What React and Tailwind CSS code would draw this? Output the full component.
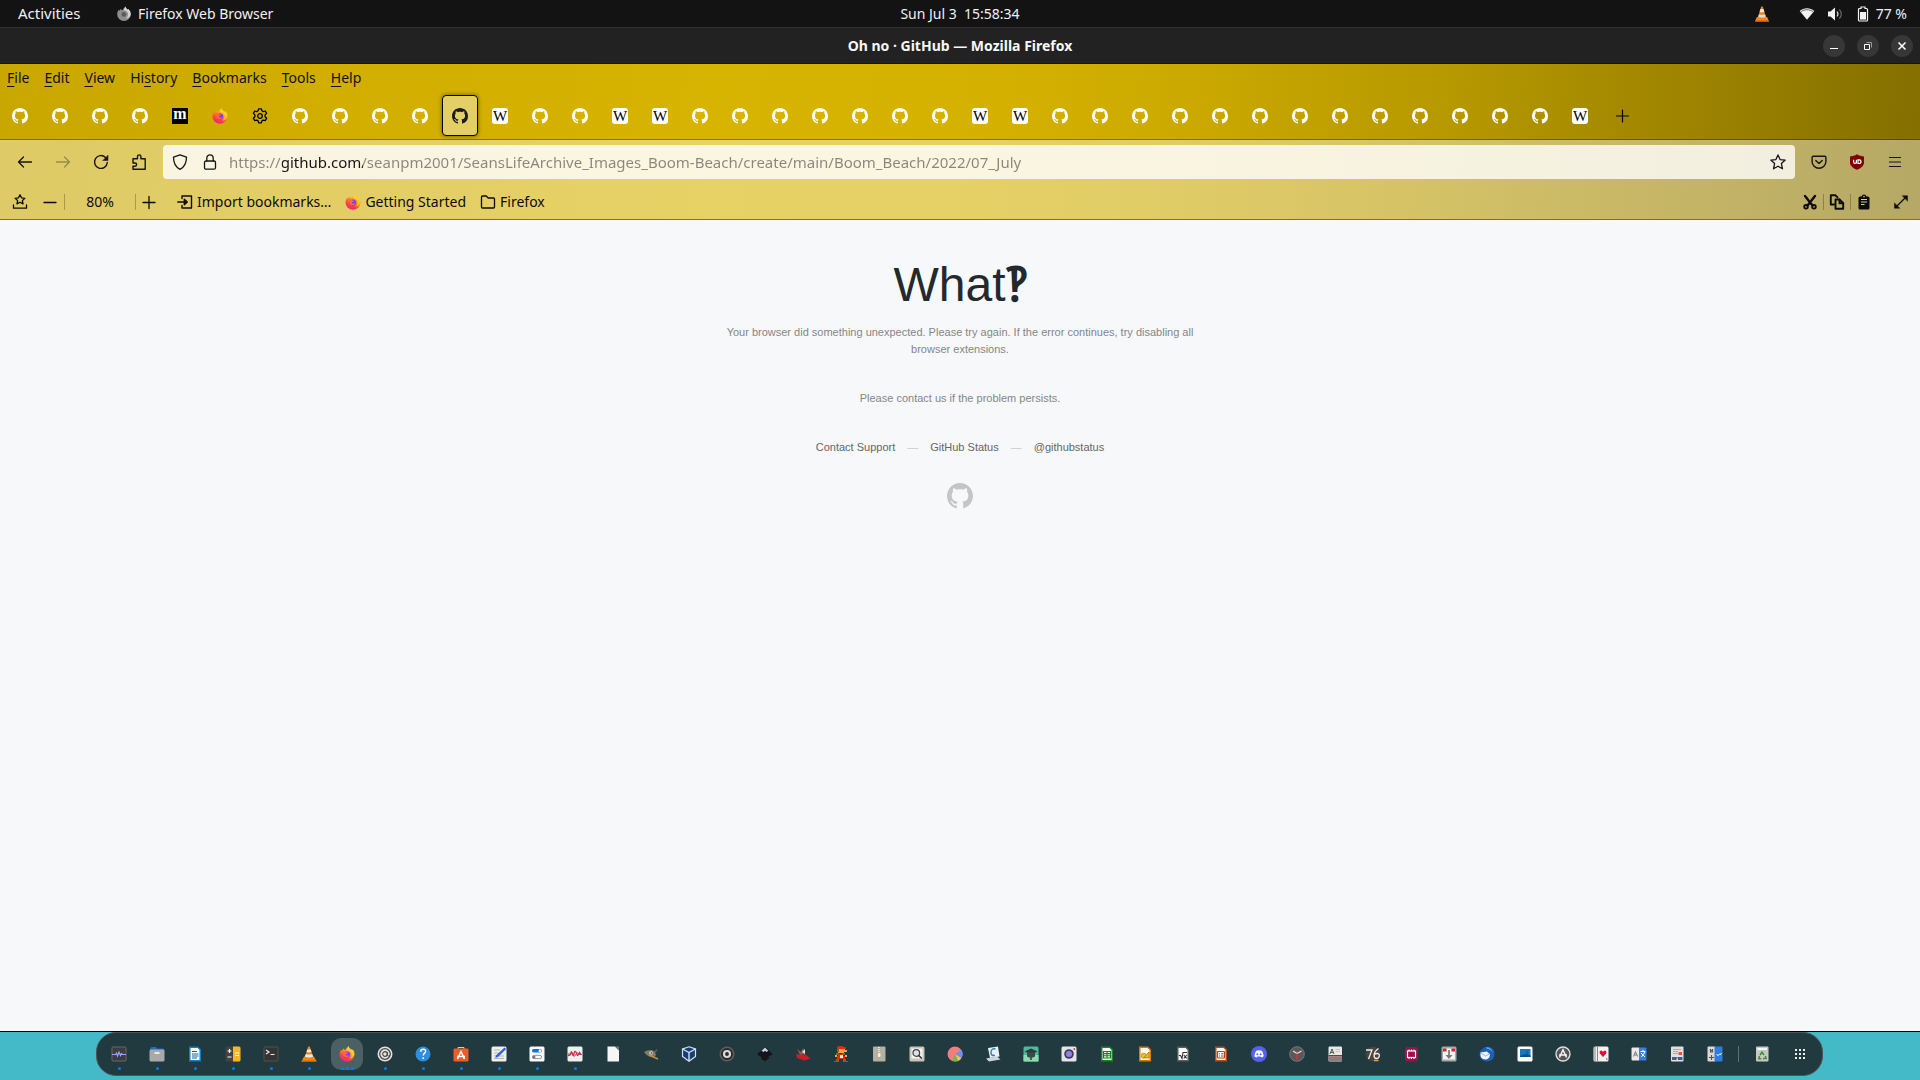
import React from "react";

/* ---------- shared drawings ---------- */

const MARK =
  "M8 0C3.58 0 0 3.58 0 8c0 3.54 2.29 6.53 5.47 7.59.4.07.55-.17.55-.38 0-.19-.01-.82-.01-1.49-2.01.37-2.53-.49-2.69-.94-.09-.23-.48-.94-.82-1.13-.28-.15-.68-.52-.01-.53.63-.01 1.08.58 1.23.82.72 1.21 1.87.87 2.33.66.07-.52.28-.87.51-1.07-1.78-.2-3.64-.89-3.64-3.95 0-.87.31-1.59.82-2.15-.08-.2-.36-1.02.08-2.12 0 0 .67-.21 2.2.82.64-.18 1.32-.27 2-.27.68 0 1.36.09 2 .27 1.53-1.04 2.2-.82 2.2-.82.44 1.1.16 1.92.08 2.12.51.56.82 1.27.82 2.15 0 3.07-1.87 3.75-3.65 3.95.29.25.54.73.54 1.48 0 1.07-.01 1.93-.01 2.2 0 .21.15.46.55.38A8.013 8.013 0 0016 8c0-4.42-3.58-8-8-8z";

function Svg({ children, className = "size-4" }) {
  return (
    <svg viewBox="0 0 16 16" className={"shrink-0 " + className} fill="none" aria-hidden="true">
      {children}
    </svg>
  );
}

function Line({ children, className, width = 1.3 }) {
  return (
    <Svg className={className}>
      <g stroke="currentColor" strokeWidth={width} strokeLinecap="round" strokeLinejoin="round">
        {children}
      </g>
    </Svg>
  );
}

function GitHub({ className }) {
  return (
    <Svg className={className}>
      <path fill="currentColor" d={MARK} />
    </Svg>
  );
}

function Firefox({ className }) {
  return (
    <Svg className={className}>
      <path d="M8 15.8A7.4 7.4 0 0 1 .5 8.4c0-2 .8-3.6 1.9-4.9l.6 1.2c.6-.6 1-1.3 1.1-2.2 1 .4 1.6 1 2 1.8.9-1.6 2-3 3.7-4.1 0 1.8 1.2 2.5 2.4 3.6l.5-.8c1.8 1.5 2.8 3.4 2.8 5.6A7.5 7.5 0 0 1 8 15.8z" fill="url(#ffBody)" />
      <path d="M9.8.2c-1.200 1-1.900 2.300-2 3.700 3.100.1 5 2.300 4.700 5-.2 2.100-1.300 3.300-2.500 4 3-.4 5.300-2.700 5.400-5.600 0-1.500-.6-2.700-1.800-3.800l-.5.8C11.800 3.200 9.800 2 9.800.2z" fill="#ffd52e" opacity=".75" />
      <circle cx="8" cy="8.600" r="3.100" fill="#7a3ff0" />
      <path d="M3.200 5.700c1.600-.7 3.100-.4 4 .6l1.900.4c-.2.9-1.200 1.200-2 1.300-.7.400-.5 1.400.6 1.600 1.200.2 1.800-.5 2.700-.4-.6 1.400-1.700 2.100-3 2-1.900-.1-3.100-1.400-3.100-3z" fill="#ff6a30" />
    </Svg>
  );
}

function GreyFirefox() {
  return (
    <Svg className="size-4">
      <path d="M8 15A6.800 6.800 0 0 1 1.200 8.200c0-1.700.6-3.200 1.600-4.400l.7 1c.5-.5.8-1.100.9-1.800.9.3 1.400.9 1.700 1.500C7 3 8.100 1.700 9.600.5c0 1.600 1.100 2.300 2.100 3.300l.5-.7a6.700 6.700 0 0 1 2.600 5.100A6.800 6.800 0 0 1 8 15z" fill="#8e8e8e" />
      <path d="M9.600.5C8.600 1.500 8 2.700 8 4.200c2.800.3 4.300 2.200 4 4.600-.1 1.700-1 3-2.200 3.700 2.900-.5 4.900-2.300 5-4.800a6 6 0 0 0-2.600-4.600l-.5.7C10.700 2.800 9.600 2.100 9.600.5z" fill="#d4d4d4" />
      <circle cx="7.800" cy="8.400" r="2.300" fill="#5a5a5a" />
    </Svg>
  );
}

function Cone() {
  return (
    <Svg>
      <path d="M2.800 11h10.400l1.800 4.600H1z" fill="#f08a10" />
      <path d="M1.400 14.400h13.200l.4 1.300H1z" fill="#c85f00" />
      <path d="M7.200.5h1.600L12.200 12c-1.800 1.300-6.600 1.300-8.400 0z" fill="#f4810a" />
      <path d="M6.500 3h3l.9 3c-1.200.6-3.600.6-4.800 0z" fill="#e8e8e8" />
      <path d="M5 8.200c1.500.7 4.500.7 6 0l.8 2.600c-1.800 1.200-5.800 1.200-7.600 0z" fill="#dcdcdc" />
    </Svg>
  );
}

function WikiTab() {
  return (
    <span className="flex size-4 items-center justify-center rounded-[3px] bg-white font-['Liberation_Serif',serif] text-[15px] leading-4 text-black">
      W
    </span>
  );
}

function MTab() {
  return (
    <span className="flex size-4 items-center justify-center bg-black font-['Liberation_Serif',serif] text-[16px] leading-[10px] font-bold text-white">
      <span className="pb-1">m</span>
    </span>
  );
}

function Gear() {
  return (
    <Line className="size-4 text-black" width={1.3}>
      <path d="M6.600.8h2.800l.5 2 1.300.8 2-.6 1.400 2.400-1.500 1.500v1.900l1.500 1.500-1.400 2.400-2-.6-1.300.8-.5 2H6.600l-.5-2-1.300-.8-2 .6-1.400-2.400 1.500-1.500V6.900L1.400 5.400 2.800 3l2 .6 1.300-.8z" />
      <circle cx="8" cy="8" r="2.300" />
    </Line>
  );
}

/* ---------- desktop bars ---------- */

function TopBar() {
  return (
    <header className="grid h-7 shrink-0 grid-cols-3 items-center border-b border-[#303030] bg-[#131313] text-[14px] text-[#f0f0f0]">
      <div className="flex items-center pl-[18px]">
        <button className="w-[98px] text-left text-[15px]">Activities</button>
        <button className="flex items-center gap-1.5">
          <GreyFirefox />
          Firefox Web Browser
        </button>
      </div>
      <button className="whitespace-pre">Sun Jul 3  15:58:34</button>
      <div className="flex items-center justify-end pr-[13px]">
        <button aria-label="VLC" className="mr-[29px]"><Cone /></button>
        <button aria-label="System menu" className="flex items-center gap-3">
          <Svg>
            <path d="M.7 5C5 1.300 11 1.300 15.300 5L8 13.800z" fill="#f2f2f2" />
            <path d="M2 5.600c3.700-2.500 8.300-2.500 12 0" stroke="#555" strokeWidth=".9" />
          </Svg>
          <Svg>
            <path d="M1 5.500h2.500L8 1.500v13l-4.500-4H1z" fill="#f2f2f2" />
            <path d="M10 5.500q2 2.500 0 5" stroke="#ddd" strokeWidth="1.200" />
            <path d="M12.300 3.300q4 4.700 0 9.400" stroke="#666" strokeWidth="1.200" />
          </Svg>
          <span className="flex items-center gap-[5px]">
            <Svg>
              <path d="M6 1h4v1.500h1.500q1 0 1 1v10.500q0 1-1 1h-7q-1 0-1-1V3.500q0-1 1-1H6z" stroke="#f2f2f2" strokeWidth="1.200" />
              <path d="M5 6h6v7.600H5z" fill="#f2f2f2" />
            </Svg>
            77 %
          </span>
        </button>
      </div>
    </header>
  );
}

function TitleBar() {
  const btn = "flex size-[22px] items-center justify-center rounded-full bg-[#373737] text-white";
  return (
    <div className="grid h-9 shrink-0 grid-cols-[1fr_auto_1fr] items-center border-b border-[#151515] bg-[#222222]">
      <span />
      <h2 className="text-[14px] font-bold text-[#f7f7f7]">Oh no · GitHub — Mozilla Firefox</h2>
      <div className="flex justify-end gap-3 pr-[7px]">
        <button aria-label="Minimize" className={btn}>
          <Svg><path d="M4 10.500h8" stroke="currentColor" /></Svg>
        </button>
        <button aria-label="Restore" className={btn}>
          <Svg>
            <path d="M4.500 6.500h5v5h-5z" stroke="currentColor" />
            <path d="M6.500 4.500h5v5" stroke="#999" />
          </Svg>
        </button>
        <button aria-label="Close" className={btn}>
          <Svg><path d="M4.500 4.500l7 7m0-7l-7 7" stroke="currentColor" strokeWidth="1.500" /></Svg>
        </button>
      </div>
    </div>
  );
}

/* ---------- browser chrome ---------- */

const MENUS = [
  ["", "F", "ile"],
  ["", "E", "dit"],
  ["", "V", "iew"],
  ["Hi", "s", "tory"],
  ["", "B", "ookmarks"],
  ["", "T", "ools"],
  ["", "H", "elp"],
];

function MenuBar() {
  return (
    <nav className="flex h-7 items-center gap-px pb-0.5 text-[14px] text-[#111]">
      {MENUS.map(([a, u, b]) => (
        <button key={u + b} className="px-[7px]">
          {a}
          <span className="underline underline-offset-3">{u}</span>
          {b}
        </button>
      ))}
    </nav>
  );
}

const TABS = "ggggmfsggggAwggwwgggggggwwgggggggggggggw".split("");

function TabIcon({ kind }) {
  if (kind === "w") return <WikiTab />;
  if (kind === "m") return <MTab />;
  if (kind === "f") return <Firefox />;
  if (kind === "s") return <Gear />;
  return <GitHub className={kind === "A" ? "size-4 text-[#1b1b1b]" : "size-4 text-white"} />;
}

function TabStrip() {
  return (
    <div className="flex h-12 items-center border-b border-black/35">
      {TABS.map((kind, i) => (
        <button
          key={i}
          aria-label={"Tab " + (i + 1)}
          className={
            kind === "A"
              ? "mx-0.5 flex h-[41px] w-9 items-center justify-center rounded-[4px] border border-black bg-white/40 shadow-[0_0_4px_rgba(0,0,0,0.5)]"
              : "flex h-[41px] w-10 items-center justify-center"
          }
        >
          <TabIcon kind={kind} />
        </button>
      ))}
      <button aria-label="New tab" className="flex w-11 justify-center text-black">
        <Line width={1.2}><path d="M8.500 2v12M2.500 8h12" /></Line>
      </button>
    </div>
  );
}

function NavButton({ label, children, faded }) {
  return (
    <button aria-label={label} className={"flex w-[38px] justify-center " + (faded ? "opacity-35" : "")}>
      {children}
    </button>
  );
}

function NavBar() {
  return (
    <div className="flex h-11 items-center gap-[5px] px-1.5 text-[#15141a]">
      <div className="flex">
        <NavButton label="Back"><Line><path d="M6.500 3l-5 5 5 5M1.500 8h13" /></Line></NavButton>
        <NavButton label="Forward" faded><Line><path d="M9.500 3l5 5-5 5M14.500 8h-13" /></Line></NavButton>
        <NavButton label="Reload">
          <Line width={1.400}>
            <path d="M14.300 8.500A6.400 6.400 0 1 1 12.500 3.500" />
            <path d="M15 1.500v5h-5z" fill="currentColor" strokeWidth=".5" />
          </Line>
        </NavButton>
        <NavButton label="Extension">
          <Line width={1.400}>
            <path d="M2 7V4.800h4.500V2.600a1.700 1.700 0 0 1 3.400 0v2.200h4.300v10.400H2v-3h2a1.600 1.600 0 0 0 0-3.200H2z" />
          </Line>
        </NavButton>
      </div>
      <div className="flex h-[34px] flex-1 items-center rounded-[4px] bg-white/80 pr-[9px] pl-[9px]">
        <button aria-label="Tracking protection">
          <Line><path d="M8 .9l6.500 2.300c0 5-1.600 9.600-6.500 12.100C3.100 12.800 1.500 8.200 1.500 3.200z" /></Line>
        </button>
        <button aria-label="Site information" className="ml-3.5">
          <Line>
            <rect x="2.500" y="7" width="11" height="8.200" rx="1.500" />
            <path d="M4.800 7V4a3.200 3.200 0 0 1 6.400 0v3" />
          </Line>
        </button>
        <input
          aria-label="Address"
          className="ml-[11px] h-8 min-w-0 flex-1 bg-[linear-gradient(90deg,#87867f_53px,#15141a_53px,#15141a_134px,#87867f_134px)] bg-clip-text text-[15px] text-transparent outline-none"
          defaultValue="https://github.com/seanpm2001/SeansLifeArchive_Images_Boom-Beach/create/main/Boom_Beach/2022/07_July"
        />
        <button aria-label="Bookmark this page">
          <Line><path d="M8 .9l2.100 4.700 5.100.5-3.800 3.500 1.100 5.200L8 12.200l-4.500 2.600 1.100-5.200L.8 6.100l5.100-.5z" /></Line>
        </button>
      </div>
      <div className="flex">
        <NavButton label="Pocket">
          <Line width={1.400}>
            <path d="M2.300 2.200h11.400q1.200 0 1.200 1.200v4a6.900 6.900 0 0 1-13.800 0v-4q0-1.200 1.200-1.200z" />
            <path d="M4.800 6.400L8 9.500l3.200-3.100" />
          </Line>
        </NavButton>
        <NavButton label="uBlock Origin">
          <Svg>
            <path d="M8 .3c2 1.400 4.500 2 7 2.100v6c0 4-4 5.800-7 7.400-3-1.600-7-3.400-7-7.400v-6C3.500 2.300 6 1.700 8 .3z" fill="#800000" />
            <path d="M4.600 5.800v2.300q0 1.400 1.400 1.400t1.400-1.400V5.800v3.700M9 5.800v3.700h1q2 0 2-1.850t-2-1.850z" stroke="#fff" strokeWidth="1.200" />
          </Svg>
        </NavButton>
        <NavButton label="Menu"><Line width={1.200}><path d="M2.500 3.500h11M2.500 8h11M2.500 12.500h11" /></Line></NavButton>
      </div>
    </div>
  );
}

function Rule() {
  return <span className="h-4 w-px bg-black/25" />;
}

function BookmarksBar() {
  return (
    <div className="flex h-9 items-center border-b border-[#8b7500] text-[14px] text-[#0c0c0d]">
      <button aria-label="Bookmarks menu" className="ml-3">
        <Line>
          <path d="M8 .8l1.500 3 3.300.5-2.400 2.300.6 3.300L8 8.300 5 9.900l.6-3.300-2.400-2.300 3.300-.5z" />
          <path d="M1.500 11v3.200h13V11" />
        </Line>
      </button>
      <button aria-label="Zoom out" className="mr-1.5 ml-3.5">
        <Line><path d="M2 8.500h12" /></Line>
      </button>
      <Rule />
      <button className="w-[70px]">80%</button>
      <Rule />
      <button aria-label="Zoom in" className="ml-[5px]">
        <Line><path d="M2 8.500h12M8 2.500v12" /></Line>
      </button>
      <div className="ml-5 flex gap-3.5">
        <button className="flex items-center gap-1">
          <Line width={1.400}>
            <path d="M5 4.500V2h9.500v12H5v-2.500M.8 8h8" />
            <path d="M7.300 5.300L10.300 8l-3 2.700z" fill="currentColor" />
          </Line>
          Import bookmarks…
        </button>
        <a href="#getting-started" className="flex items-center gap-1"><Firefox />Getting Started</a>
        <button className="flex items-center gap-1">
          <Line><path d="M1.500 3q0-1 1-1h3.700l2 2h5.300q1 0 1 1v8q0 1-1 1h-11q-1 0-1-1z" /></Line>
          Firefox
        </button>
      </div>
      <div className="ml-auto flex items-center pr-[11px]">
        <button aria-label="Cut" className="mr-[5px]">
          <Line width={1.800}>
            <path d="M3 2l7.500 9.500M13 2L5.500 11.500" strokeWidth="2.400" />
            <circle cx="4" cy="12.800" r="1.800" />
            <circle cx="12" cy="12.800" r="1.800" />
          </Line>
        </button>
        <Rule />
        <button aria-label="Copy" className="mx-[5px]">
          <Line width={1.900}>
            <path d="M5 10.500H1.800V1.200h4.500l2.200 2.200" />
            <path d="M6.500 5.500h4l3.700 3.700v5.500H6.500z" />
            <path d="M10.500 5.500v3.700h3.700" />
          </Line>
        </button>
        <Rule />
        <button aria-label="Paste" className="ml-[5px]">
          <Svg>
            <path d="M4 2.500h1.500Q6 .5 8 .5t2.500 2H12q1.500 0 1.500 1.500v10q0 1.500-1.500 1.500H4Q2.500 15.500 2.500 14V4q0-1.500 1.500-1.500z" fill="currentColor" />
            <path d="M5 5.500h6M5 8h6M5 10.500h3.500" stroke="#d8cd93" />
            <circle cx="8" cy="2.600" r=".8" fill="#d8cd93" />
          </Svg>
        </button>
        <button aria-label="Full screen" className="ml-[21px]">
          <Line>
            <path d="M3 13L13 3" />
            <path d="M9.500 1.800h5v5zM1.500 9.200v5h5z" fill="currentColor" strokeWidth=".5" />
          </Line>
        </button>
      </div>
    </div>
  );
}

/* ---------- page ---------- */

function Page() {
  return (
    <main className="flex flex-1 flex-col items-center border-b border-black bg-[#f6f8fa] pt-[41px] font-['Liberation_Sans',Arial,sans-serif] text-[11px] leading-[17px] text-[#868686]">
      <h1 className="text-[48px] leading-[48px] text-[#24292e]">
        What<span className="font-bold">‽</span>
      </h1>
      <p className="mt-[15px] max-w-[480px] text-center">
        Your browser did something unexpected. Please try again. If the error continues, try disabling all browser extensions.
      </p>
      <p className="mt-8">Please contact us if the problem persists.</p>
      <div className="mt-8 flex gap-3 text-[#666]">
        <a href="#support">Contact Support</a>
        <span className="text-[#ccc]">—</span>
        <a href="#status">GitHub Status</a>
        <span className="text-[#ccc]">—</span>
        <a href="#twitter">@githubstatus</a>
      </div>
      <a href="#home" aria-label="GitHub" className="mt-[27px] text-[#c4c5c6]">
        <GitHub className="size-[26px]" />
      </a>
    </main>
  );
}

/* ---------- dock ---------- */

const sheet = (border, extra) => (
  <>
    <path d="M2 .5h9l3 3v12H2z" fill={border} />
    <path d="M3.500 2h7l2 2v10h-9z" fill="#fafafa" />
    {extra}
  </>
);

const tile = (fill, extra) => (
  <>
    <rect x=".5" y=".5" width="15" height="15" rx="1.500" fill={fill} />
    {extra}
  </>
);

const DOCK = [
  ["System Monitor", 1, tile("#3b3d42", <><rect x="1" y="1" width="14" height="14" rx="1" stroke="#666" /><path d="M1 8.500h3.500l1-1.500 1 3L8 6l1.500 3.500 1-2 1 1H15" stroke="#8fa8f5" strokeWidth="1.200" /></>)],
  ["Files", 1, <><path d="M1 3q0-2 2-2h4l1 1.500h6q1.500 0 1.500 2H1z" fill="#1b6fd0" /><rect x=".5" y="3.500" width="15" height="12" rx="1.500" fill="#a9a9a9" /><path d="M5.500 7h5" stroke="#fff" strokeWidth="1.300" /></>],
  ["Writer", 1, sheet("#0b7fc7", <path d="M5 5.500h5M5 8h6.500M5 10h6.500M5 12h5" stroke="#126ba8" strokeWidth="1.200" />)],
  ["Calculator", 1, tile("#45423f", <><path d="M8 .5h6q1.500 0 1.500 1.500v12q0 1.500-1.500 1.500H8z" fill="#f9b526" /><path d="M2.500 5h4M4.500 3v4M2.500 11h4M10 7h4M10 9.500h4" stroke="#fff" strokeWidth="1.200" /></>)],
  ["Terminal", 1, tile("#54514f", <><rect x="1.500" y="1.500" width="13" height="13" fill="#353333" /><path d="M3 4l3 2-3 2M7.500 8.500h4" stroke="#eee" strokeWidth="1.200" /></>)],
  ["VLC", 1, <><path d="M3 10.500h10l2.500 5H.5z" fill="#f48a0c" /><path d="M.5 14.500h15v1.200H.5z" fill="#cf6500" /><path d="M7.200.5h1.600l3.700 11.500c-2 1.300-7 1.300-9 0z" fill="#f4810a" /><path d="M6.300 3.500h3.400l.8 2.500c-1.200.6-3.800.6-5 0zM4.800 8c1.600.8 4.800.8 6.400 0l.9 2.800c-2 1-6.200 1-8.200 0z" fill="#e9e9e9" /></>],
  ["Firefox", 3, null],
  ["Mail address", 1, <><circle cx="8" cy="8" r="7.500" fill="#e4e1de" /><circle cx="8" cy="8" r="5.300" stroke="#4a4a4a" strokeWidth="1.300" /><circle cx="8" cy="8" r="2.300" stroke="#4a4a4a" strokeWidth="1.200" /><path d="M10.400 6v3.500q1.500 1.500 2.600-.5" stroke="#4a4a4a" /></>],
  ["Help", 1, <><circle cx="8" cy="8" r="7.500" fill="#2f8edb" /><path d="M5.700 5.800q0-2.500 2.500-2.500t2.400 2.200c0 1.600-2.400 1.800-2.400 4M8.200 11.200v1.800" stroke="#fff" strokeWidth="1.400" /></>],
  ["Software", 1, <><path d="M5 3V1.500h6V3" stroke="#d9cfc0" /><rect x=".5" y="2.500" width="15" height="13" rx="1.200" fill="#e95d2c" /><path d="M4.500 13L8 5.500l3.500 7.500M4 10.500h8" stroke="#fff" strokeWidth="1.500" /></>],
  ["Text Editor", 1, tile("#f1efe9", <><path d="M3 4h6M3 7h5M3 10h10M3 12.500h10" stroke="#b7b3a8" /><path d="M13.500 1.500l1.700 1.500L7 11l-2.700 1 .9-2.700z" fill="#2e5fe0" /></>)],
  ["Settings", 1, tile("#fafafa", <><rect x="3" y="3" width="10" height="3.600" rx="1.800" fill="#1470d8" /><circle cx="11" cy="4.800" r="1.500" fill="#fff" /><rect x="3.400" y="9.400" width="9.200" height="3.200" rx="1.600" stroke="#999" /><circle cx="5" cy="11" r="1.500" fill="#777" /></>)],
  ["Power Statistics", 1, tile("#efefef", <><path d="M1 8h2.500q1.200-4 2.400 0t2.600 1 2.500-2 1.500 1.500H15" stroke="#3a7bd5" /><path d="M1 9.500q2.500 0 3-2.500t1.500 1 1.500 0 1.500-2.500 1.500 3 1.500 0 1-2 1.500 2" stroke="#d0323c" strokeWidth="1.300" /></>)],
  ["LibreOffice", 0, <><path d="M2.500.5h7.500l4 4v11H2.500z" fill="#f6f6f6" /><path d="M10 .5h4v4z" fill="#777" /></>],
  ["GIMP", 0, <><path d="M1 6l3-1.500L9 4l3 2 1 3-2 2.500-5-1L3 8.500z" fill="#827b6a" /><circle cx="8" cy="7" r="1.800" fill="#ddd" /><circle cx="8.300" cy="7" r=".8" fill="#222" /><path d="M6 9l9 4" stroke="#c88a3c" strokeWidth="1.400" /><path d="M12 6l2-2.500" stroke="#6c6453" strokeWidth="1.300" /></>],
  ["VirtualBox", 0, <><path d="M8 .8L14.500 3v7.500L8 15.200l-6.500-4.700V3z" fill="#173d77" stroke="#d4e2f2" strokeWidth="1.200" /><path d="M1.500 3L8 6.500 14.500 3M8 6.500v8.700" stroke="#d4e2f2" strokeWidth="1.400" /></>],
  ["Rhythmbox", 0, <><circle cx="8" cy="8" r="7.500" fill="#5f5e5c" /><circle cx="8" cy="8" r="6" fill="#2b2b2b" /><circle cx="8" cy="8" r="3" stroke="#d8d8d8" strokeWidth="2.200" /></>],
  ["Inkscape", 0, <><path d="M8 .8l7 6.700q.8 1.500-1.500 2l-2 .7 1 1.500L8 15.300l-4-2.500.8-1.600L1.500 9.500Q-.2 8.500 1 7.500z" fill="#14151c" /><path d="M8 1.500l3.200 3.200L9.500 6 8 4.800 6.500 6l-2-1.300z" fill="#c9cfdd" /></>],
  ["Kart", 0, <><path d="M1 8l5 1 4-1 5.500 4.500-6 2L2 12z" fill="#c81e2c" /><path d="M2 3l4 3 2-4 2 6-5 1z" fill="#8f5b4d" /><path d="M7 6l3-3v5z" fill="#ddd" /></>],
  ["Mario", 0, <g shapeRendering="crispEdges"><path d="M5 0h5v1h3v2H4V1h1zM5 8h5v2h2v3H4v-3h1z" fill="#e3280c" /><path d="M5 3h7v1h2v2h-3v1H5V6H4V4h1zM2 9h2v2H2zM12 9h2v2h-2z" fill="#f5a545" /><path d="M4 3h2v3H4zM3 7h3v2H3zM9 7h3v2H9zM3 13h3v3H1v-1h2zM10 13h3v2h2v1h-5z" fill="#7f6a06" /><path d="M7 9h3v3H7z" fill="#e8e8ff" /></g>],
  ["Archive Manager", 0, <><rect x="2" y=".5" width="12.500" height="15" rx="1" fill="#b6b0a1" /><path d="M8 1v6" stroke="#f5f5f5" strokeWidth="1.500" strokeDasharray="1 1" /><rect x="7" y="7" width="2.500" height="4" rx="1" fill="#f2f2f2" /></>],
  ["Image Viewer", 0, tile("#c9c5b9", <><path d="M2.500 2.500h11v10h-11z" fill="#f5f4ee" /><circle cx="7.300" cy="7" r="3.300" fill="#dce4e6" stroke="#444" strokeWidth="1.300" /><path d="M9.800 9.500l3 3" stroke="#333" strokeWidth="1.600" /></>)],
  ["Disk Usage", 0, <><circle cx="8" cy="8" r="7.500" fill="#f37c7c" /><path d="M8 8l6.500-4a7.500 7.500 0 0 1 0 8z" fill="#6f8df3" /><path d="M8 8l6.300 4.200A7.500 7.500 0 0 1 11 15z" fill="#f7c548" /><path d="M8 8l3 7a7.500 7.500 0 0 1-5.500.1z" fill="#67b854" /></>],
  ["Remote Viewer", 0, <><path d="M3 2l10-1.500 1.500 10L5 12z" fill="#e9f1f4" /><path d="M1 12.500l11-2 3.500 3L4 15.500z" fill="#cfd5d6" /><path d="M10.500 3q-4-1-4.500 3t4 3.500" stroke="#2e86b5" strokeWidth="1.500" /></>],
  ["Learning", 0, tile("#4fb9a0", <><path d="M.5 9h15v6.500H.5z" fill="#8adcb0" /><path d="M1.500 5.500L8 2.500l6.500 3L8 8.500z" fill="#2f3a3a" /><path d="M4 6.500h8v4q-4 2.500-8 0z" fill="#3d4a49" /><path d="M7 11h2v3H7z" fill="#555" /></>)],
  ["Cheese", 0, tile("#e5e4e8", <><circle cx="8" cy="8" r="4.800" fill="#403b68" /><circle cx="8" cy="8" r="3" fill="#8f84de" /><circle cx="13.300" cy="3" r=".9" fill="#d33" /></>)],
  ["Calc", 0, sheet("#168a1c", <path d="M4.500 5.500h7v6.500h-7zM8 5.500v6.500M4.500 7.600h7M4.500 9.800h7" stroke="#14801a" strokeWidth="1.100" />)],
  ["Draw", 0, sheet("#d9780a", <><circle cx="6.700" cy="9.700" r="2.500" fill="#f0bd3a" stroke="#d9920a" /><path d="M7 11.500L12 6v6z" fill="#f0bd3a" stroke="#c97c08" /></>)],
  ["Math", 0, sheet("#5c5c5c", <path d="M4 9.500h1.500L7 12.500l1-6h4M8.800 9l3 3.500m0-3.500l-3 3.500" stroke="#333" strokeWidth="1.100" />)],
  ["Impress", 0, sheet("#b84a16", <><rect x="4.500" y="5.500" width="7" height="6.500" rx=".5" stroke="#b04412" strokeWidth="1.200" /><path d="M6 7.800h1M8 7.800h2.500M6 10h1M8 10h2.500" stroke="#b04412" /></>)],
  ["Discord", 0, <><circle cx="8" cy="8" r="8" fill="#5562ea" /><path d="M5.300 4.800q2.700-1 5.400 0 2 2.500 2 5.500-1 .9-2.500 1.100l-.6-1q-1.600.4-3.200 0l-.6 1q-1.500-.2-2.500-1.100 0-3 2-5.500z" fill="#fff" /><circle cx="6.400" cy="8.200" r="1" fill="#5562ea" /><circle cx="9.600" cy="8.200" r="1" fill="#5562ea" /></>],
  ["Clocks", 0, <><circle cx="8" cy="8" r="7.300" fill="#5b5958" stroke="#777" /><path d="M4 5l4 2.500L12.500 5" stroke="#ddd" strokeWidth="1.300" /><path d="M8 7.500V13" stroke="#d8323c" strokeWidth="1.300" /></>],
  ["Dictionary", 0, <><rect x="1.500" y=".5" width="13.500" height="15" rx="1.200" fill="#e8e8e8" /><path d="M3 8l2-5 2 5M3.700 6.500h2.600" stroke="#555" /><path d="M8.500 3.500H13M8.500 5.500H13" stroke="#c5c5c5" /><path d="M1.500 9H15v1.500H1.500z" fill="#c9161c" /><path d="M1.500 10.500H15V14q0 1.500-1.500 1.500H3Q1.500 15.500 1.500 14z" fill="#8a7f7c" /></>],
  ["Popsicle", 0, <><circle cx="8" cy="8" r="7.500" fill="#4a433e" /><path d="M1 4h6L3.500 13M13.500 2.500Q9 5.500 9 9.500q0 3 2.500 3t2.800-2.500T12 7.500 9 9.500" stroke="#eee" strokeWidth="1.300" /><path d="M9 14.500h4.500" stroke="#f0a020" strokeWidth="1.400" /></>],
  ["Firmware", 0, <><rect x="2" y="1" width="13" height="14.500" rx="2" fill="#9e0f4b" /><rect x="4.500" y="5" width="8" height="6.500" stroke="#fff" strokeWidth="1.200" /><path d="M6 3.500V5M8.500 3.500V5M11 3.500V5M6 11.500V13M8.500 11.500V13M11 11.500V13" stroke="#fff" /></>],
  ["Transmission", 0, tile("#a9a9a9", <><path d="M2 2.500h12v11H2z" fill="#f4f4f4" /><path d="M2 2.500h3.500v3H2zM10.500 2.500H14v3h-3.500z" fill="#e01b24" /><path d="M8 4v6" stroke="#888" strokeWidth="2" /><path d="M4.500 9h7L8 13z" fill="#777" /></>)],
  ["Thunderbird", 0, <><path d="M5 1.500Q12-1 15 5q2 7-4 10-6 1.500-9-2Q-1 8 2 4z" fill="#1d5fb5" /><path d="M7 1q6 0 7 6-2-4-6-4z" fill="#4aa3e8" /><path d="M1.500 6.500L8 5.500l3 3q-.5 4.500-4 5-4.500 0-5.500-3.500z" fill="#f0f4f8" /><path d="M2 7l4.500 3 4-2" stroke="#a5b8cc" /></>],
  ["Window Preview", 0, tile("#fbfbfb", <><path d="M3 3h10.500v8H3z" fill="#1878b8" /><path d="M3 10l5-2 1.500.5V5h1v3.500l3 1V11H3z" fill="#0d4f86" /></>)],
  ["Software Updater", 0, <><circle cx="8" cy="8" r="7" fill="#555" stroke="#ddd" strokeWidth="1.400" /><path d="M4.500 11.500L8 3.800l3.500 7.700M4 9h8" stroke="#f5f5f5" strokeWidth="1.500" /></>],
  ["Solitaire", 0, tile("#f3f1ee", <><path d="M2 1v14M4.500 1v14" stroke="#8a8583" /><path d="M10 11L6.800 7.500q-.8-2.700 1.500-3Q9.500 4.500 10 6q.5-1.500 1.700-1.500 2.300.3 1.500 3z" fill="#d8103a" /><path d="M13 13h1.500" stroke="#d8103a" /></>)],
  ["Translator", 0, <><rect x=".5" y="1.500" width="8" height="13" rx="1" fill="#ece9e6" /><path d="M8 1.500h6.500q1 0 1 1v11q0 1-1 1H8z" fill="#3a7fe0" /><path d="M2.500 10.500l2-5 2 5M3.300 9h2.500" stroke="#777" /><path d="M9.500 5.500h5M12 4v1.500M10.500 11l3.500-5M10 7l4 4" stroke="#fff" /></>],
  ["News Reader", 0, <><rect x="2" y=".5" width="12.500" height="15" rx="1" fill="#e3e0dc" /><path d="M4 3.500h8M4 5.500h5M4 7.500h5" stroke="#aaa" /><path d="M9.500 6H13v3H9.500z" fill="#ee5042" /><path d="M3 11h4.500v3H3zM9 11h4.500v3H9z" fill="#2b62a8" /><path d="M7 12h2.500" stroke="#2b62a8" /></>],
  ["Characters", 0, <><rect x=".5" y=".5" width="8" height="15" rx="1" fill="#ddd9d4" /><path d="M7.500.5h7q1 0 1 1v13q0 1-1 1h-7z" fill="#2f7be0" /><path d="M3.500 3v3h2V3M3.500 4.500h2M4.500 9v5M2 11.500h5" stroke="#555" strokeWidth="1.200" /><path d="M9.500 8.500q2 2.500 3-.5 1 1.500 2-1" stroke="#fff" /></>],
];

function DockItem({ name, dots, drawing }) {
  const active = dots === 3;
  return (
    <button aria-label={name} className="flex h-full w-[38px] justify-center pt-[5px]">
      <span
        className={
          "flex h-8 w-8 flex-col items-center justify-between rounded-[10px] pt-2 " + (active ? "bg-[#4b6063]" : "")
        }
      >
        {active ? <Firefox /> : <Svg>{drawing}</Svg>}
        <span className="flex gap-[2px]">
          {Array.from({ length: dots }, (_, i) => (
            <span key={i} className="size-[3px] rounded-full bg-[#0a78ea]" />
          ))}
        </span>
      </span>
    </button>
  );
}

function Dock() {
  return (
    <footer className="flex h-12 shrink-0 justify-center bg-[#44bac9]">
      <div className="mr-px flex h-11 items-center overflow-hidden rounded-[20px] border border-[#4c5456] bg-[#203a3f] px-[3px]">
        {DOCK.map(([name, dots, drawing]) => (
          <DockItem key={name} name={name} dots={dots} drawing={drawing} />
        ))}
        <span className="mx-1 h-4 w-px bg-[#5d7073]" />
        <DockItem
          name="Trash"
          dots={0}
          drawing={
            <>
              <rect x="2" y=".5" width="12.500" height="15" rx="1" fill="#c9c8c6" />
              <path d="M3.500 2h9.500v2H3.500z" fill="#fff" />
              <path d="M6 9l2-2.800L10 9M11.300 10l.7 2.500H9M7.300 12.800H4.800L5.500 10" stroke="#3b962f" strokeWidth="1.600" />
            </>
          }
        />
        <DockItem
          name="Show Applications"
          dots={0}
          drawing={
            <path
              d="M3 3h2v2H3zM7 3h2v2H7zM11 3h2v2h-2zM3 7h2v2H3zM7 7h2v2H7zM11 7h2v2h-2zM3 11h2v2H3zM7 11h2v2H7zM11 11h2v2h-2z"
              fill="#f0f0f0"
            />
          }
        />
      </div>
    </footer>
  );
}

export default function App() {
  return (
    <div className="flex min-h-screen flex-col font-['Noto_Sans',sans-serif]">
      <svg className="absolute size-0" aria-hidden="true">
        <defs>
          <linearGradient id="ffBody" x1=".8" y1="0" x2=".3" y2="1">
            <stop offset="0" stopColor="#ffe03a" />
            <stop offset=".45" stopColor="#ff8a1e" />
            <stop offset=".75" stopColor="#ff3b4e" />
            <stop offset="1" stopColor="#f01e8c" />
          </linearGradient>
        </defs>
      </svg>
      <TopBar />
      <TitleBar />
      <div className="shrink-0 bg-[linear-gradient(92deg,#c8a700_0%,#d0ad00_15%,#d7b400_37%,#d5b200_50%,#cdab00_60%,#b79900_75%,#9f8500_87%,#846f00_100%)]">
        <MenuBar />
        <TabStrip />
        <div className="bg-white/40">
          <NavBar />
          <BookmarksBar />
        </div>
      </div>
      <Page />
      <Dock />
    </div>
  );
}
